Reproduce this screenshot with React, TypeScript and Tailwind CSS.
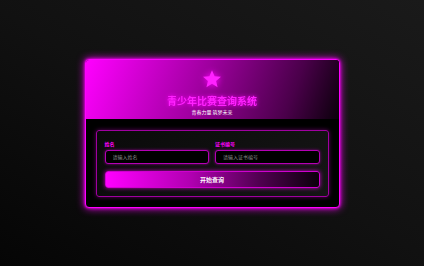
import { useState } from "react";

const font = { fontFamily: '"Noto Sans CJK SC", "Noto Sans", sans-serif' };

const Star = () => (
  <svg viewBox="0 0 24 24" className="h-[20px] w-[20px] drop-shadow-[0_0_3px_#ff00ff]">
    <path
      d="M12 1.5l3.1 7.1 7.7.6-5.9 5.1 1.8 7.6L12 17.8l-6.7 4.1 1.8-7.6-5.9-5.1 7.7-.6z"
      fill="#ff22ff"
    />
  </svg>
);

const Field = ({
  label,
  placeholder,
  value,
  onChange,
}: {
  label: string;
  placeholder: string;
  value: string;
  onChange: (v: string) => void;
}) => (
  <div className="flex flex-1 flex-col gap-[3px]">
    <label className="text-[5px] font-bold leading-[7px] text-[#ff00ff]">{label}</label>
    <input
      value={value}
      onChange={(e) => onChange(e.target.value)}
      placeholder={placeholder}
      className="h-[14px] rounded-[3px] border border-[#b400b4] bg-black px-[7px] text-[5px] text-white shadow-[0_0_3px_#8a008a] outline-none placeholder:text-[#8a8a8a]"
    />
  </div>
);

export default function App() {
  const [name, setName] = useState("");
  const [cert, setCert] = useState("");

  return (
    <div
      style={font}
      className="flex h-[266px] w-[424px] items-center justify-center bg-[linear-gradient(30deg,#050505_0%,#111111_50%,#1a1a1a_100%)]"
    >
      <div className="w-[255px] overflow-hidden rounded-[4px] border border-[#ff00ff] bg-black shadow-[0_0_8px_#ff00ff,0_0_3px_#ff00ff]">
        <div className="flex h-[59px] flex-col items-center bg-[linear-gradient(110deg,#ff00ff_0%,#a000a0_45%,#4a004a_80%,#0a000a_100%)] pt-[9px]">
          <Star />
          <h1 className="mt-[6px] text-[10px] font-bold leading-[12px] text-[#ff22ff] drop-shadow-[0_0_2px_#ff00ff]">
            青少年比赛查询系统
          </h1>
          <p className="mt-[1px] text-[5px] leading-[7px] text-white">青春力量 筑梦未来</p>
        </div>
        <div className="px-[10px] pb-[10px] pt-[11px]">
          <div className="flex flex-col gap-[7px] rounded-[3px] border border-[#a000a0] bg-[linear-gradient(135deg,#0a0a0a,#151515)] px-[8px] pb-[8px] pt-[9px] shadow-[0_0_4px_#600060]">
            <div className="flex gap-[6px]">
              <Field label="姓名" placeholder="请输入姓名" value={name} onChange={setName} />
              <Field label="证书编号" placeholder="请输入证书编号" value={cert} onChange={setCert} />
            </div>
            <button className="flex h-[17px] items-center justify-center rounded-[3px] border border-[#d000d0] bg-[linear-gradient(90deg,#ff00ff_0%,#b000b0_40%,#500050_72%,#0a000a_100%)] text-[6px] font-bold text-white shadow-[0_0_4px_#c000c0]">
              开始查询
            </button>
          </div>
        </div>
      </div>
    </div>
  );
}
